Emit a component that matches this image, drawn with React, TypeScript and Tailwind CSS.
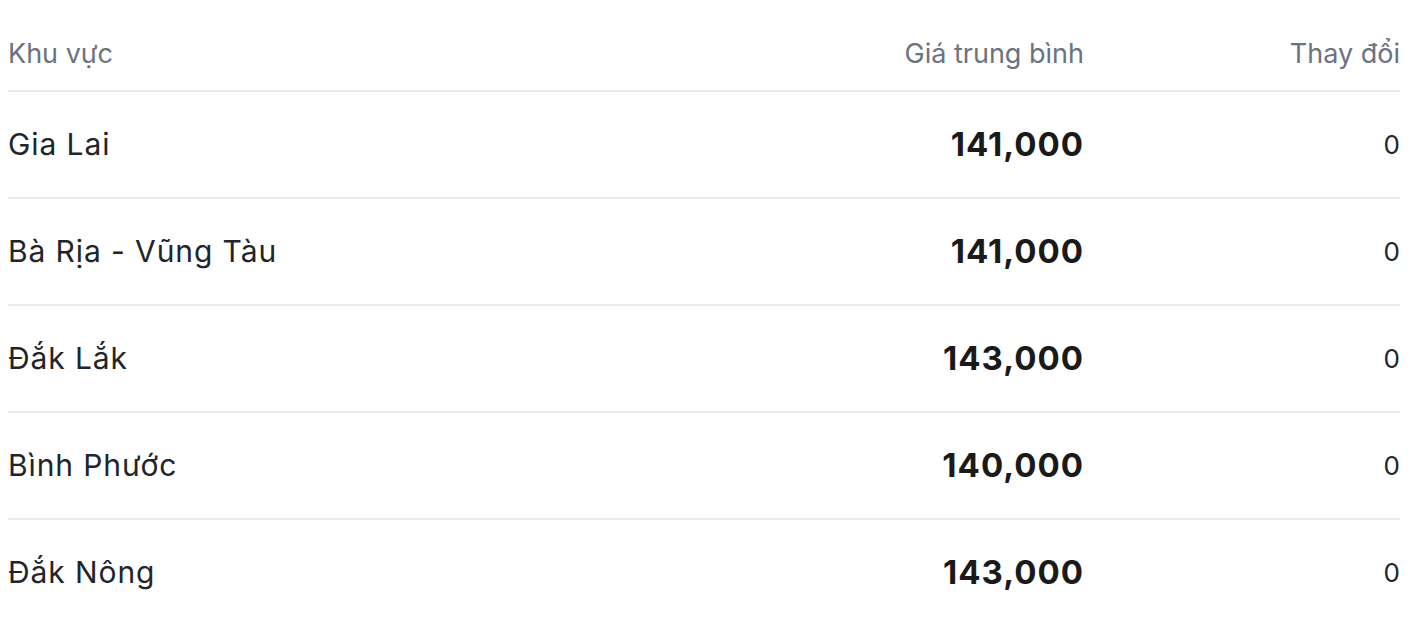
import React from "react";

const rows = [
  { name: "Gia Lai", price: "141,000", change: "0" },
  { name: "Bà Rịa - Vũng Tàu", price: "141,000", change: "0" },
  { name: "Đắk Lắk", price: "143,000", change: "0" },
  { name: "Bình Phước", price: "140,000", change: "0" },
  { name: "Đắk Nông", price: "143,000", change: "0" },
];

export default function App() {
  return (
    <div
      className="w-[1423px] h-[619px] overflow-hidden bg-white px-[8px]"
      style={{ fontFamily: "Inter, 'Noto Sans', sans-serif" }}
    >
      <div className="w-[1392px]">
        <div className="flex items-start border-b-2 border-[#ebebeb] pt-[37px] pb-[19px] text-[27px] leading-[34px] text-[#6b7280]">
          <div className="flex-1">Khu vực</div>
          <div className="w-[400px] text-right">Giá trung bình</div>
          <div className="w-[316px] text-right">Thay đổi</div>
        </div>
        {rows.map((r) => (
          <div
            key={r.name}
            className="flex h-[107px] items-center border-b-2 border-[#ebebeb]"
          >
            <div className="flex-1 text-[30px] tracking-[0.9px] text-[#212529]">
              {r.name}
            </div>
            <div className="w-[400px] text-right text-[33px] font-bold tracking-[1px] text-[#1a1a1a] mr-[-2px]">
              {r.price}
            </div>
            <div className="w-[318px] text-right text-[26px] text-[#212529]">
              {r.change}
            </div>
          </div>
        ))}
      </div>
    </div>
  );
}
